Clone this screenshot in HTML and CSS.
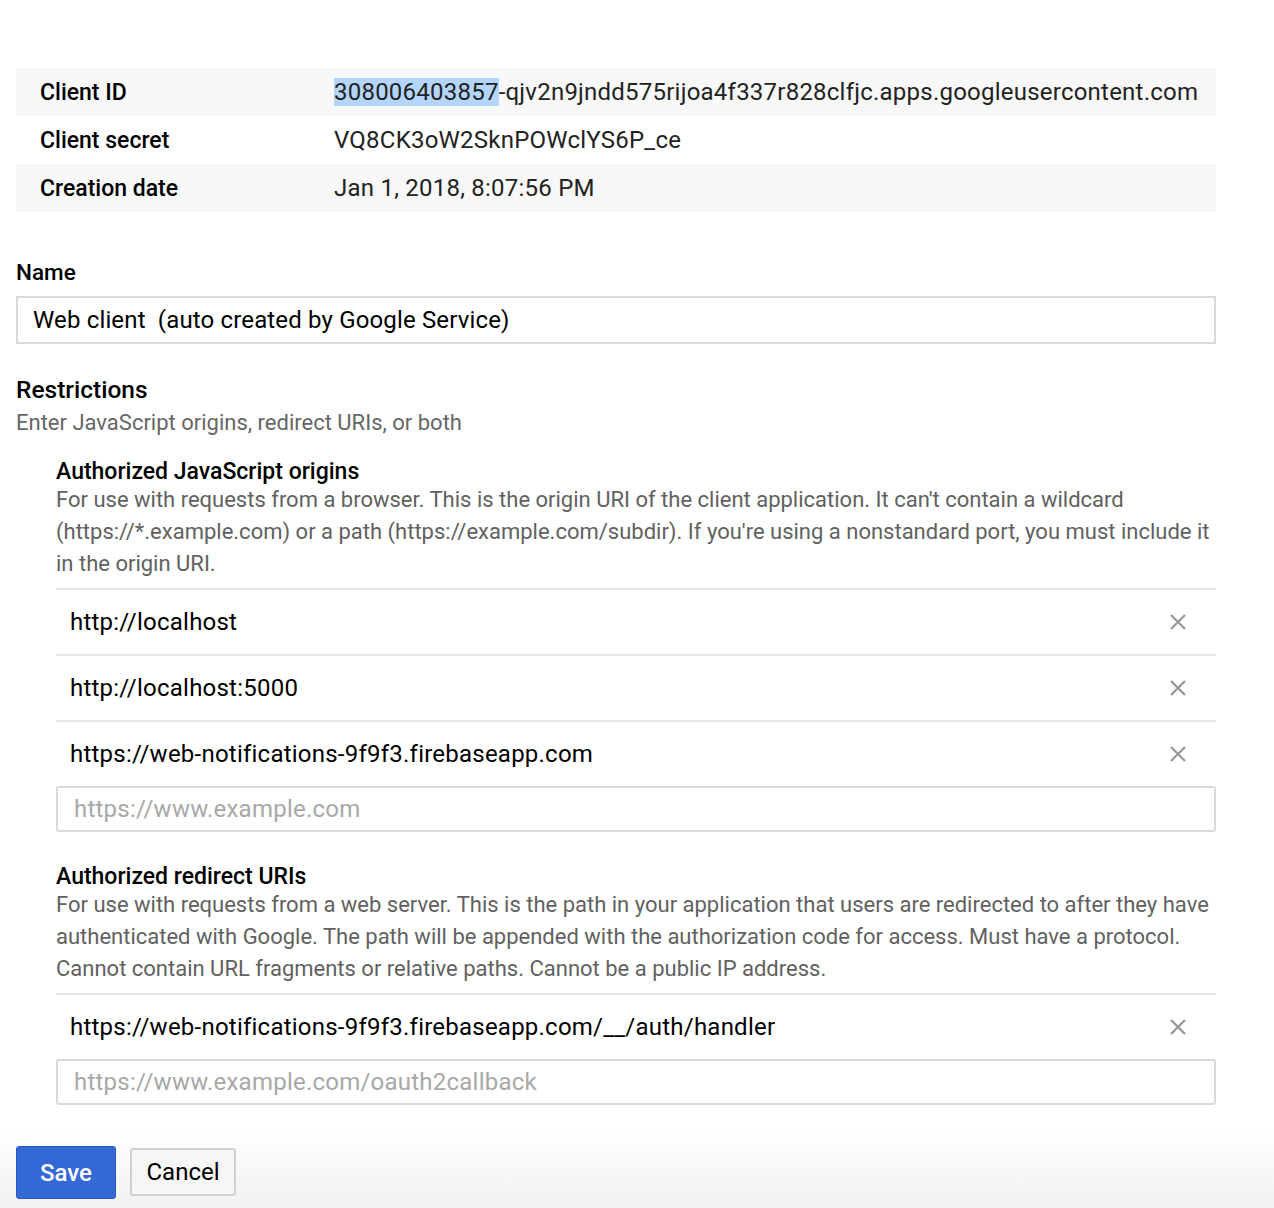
FILE: index.html
```html
<!DOCTYPE html>
<html>
<head>
<meta charset="utf-8">
<link rel="stylesheet" href="styles.css">
</head>
<body>
<div class="page">
  <div class="info">
    <div class="info-row shaded"><div class="info-label">Client ID</div><div class="info-value"><span class="sel">308006403857</span>-qjv2n9jndd575rijoa4f337r828clfjc.apps.googleusercontent.com</div></div>
    <div class="info-row"><div class="info-label">Client secret</div><div class="info-value">VQ8CK3oW2SknPOWclYS6P_ce</div></div>
    <div class="info-row shaded"><div class="info-label">Creation date</div><div class="info-value">Jan 1, 2018, 8:07:56 PM</div></div>
  </div>

  <div class="field">
    <div class="field-label">Name</div>
    <div class="text-input">Web client&nbsp; (auto created by Google Service)</div>
  </div>

  <div class="restrictions">
    <div class="section-title">Restrictions</div>
    <div class="section-sub">Enter JavaScript origins, redirect URIs, or both</div>

    <div class="group">
      <div class="group-title">Authorized JavaScript origins</div>
      <div class="group-desc">For use with requests from a browser. This is the origin URI of the client application. It can't contain a wildcard (https://*.example.com) or a path (https://example.com/subdir). If you're using a nonstandard port, you must include it in the origin URI.</div>
      <div class="list">
        <div class="item"><span>http://localhost</span><svg class="x" viewBox="0 0 18 18"><path d="M2 2L16 16M16 2L2 16"/></svg></div>
        <div class="item"><span>http://localhost:5000</span><svg class="x" viewBox="0 0 18 18"><path d="M2 2L16 16M16 2L2 16"/></svg></div>
        <div class="item last"><span>https://web-notifications-9f9f3.firebaseapp.com</span><svg class="x" viewBox="0 0 18 18"><path d="M2 2L16 16M16 2L2 16"/></svg></div>
        <div class="add-input">https://www.example.com</div>
      </div>
    </div>

    <div class="group">
      <div class="group-title">Authorized redirect URIs</div>
      <div class="group-desc">For use with requests from a web server. This is the path in your application that users are redirected to after they have authenticated with Google. The path will be appended with the authorization code for access. Must have a protocol. Cannot contain URL fragments or relative paths. Cannot be a public IP address.</div>
      <div class="list">
        <div class="item last"><span>https://web-notifications-9f9f3.firebaseapp.com/__/auth/handler</span><svg class="x" viewBox="0 0 18 18"><path d="M2 2L16 16M16 2L2 16"/></svg></div>
        <div class="add-input">https://www.example.com/oauth2callback</div>
      </div>
    </div>
  </div>
</div>
<div class="footer">
  <button class="btn primary">Save</button>
  <button class="btn">Cancel</button>
</div>
</body>
</html>
```
FILE: styles.css
```css
html, body {
  margin: 0;
  padding: 0;
  background: #fff;
}
body {
  font-family: Roboto, "Noto Sans", Arial, sans-serif;
  color: #212121;
  width: 1274px;
  height: 1208px;
  overflow: hidden;
}
.page {
  padding: 68px 58px 0 16px;
}
.info-row {
  display: flex;
  height: 48px;
  align-items: center;
}
.info-row.shaded {
  background: #f8f8f8;
}
.info-label {
  width: 294px;
  padding-left: 24px;
  font-size: 23px;
  font-weight: 500;
  color: #000;
}
.info-value {
  font-size: 24px;
  letter-spacing: 0.23px;
  color: #222;
}
.sel {
  background: #b4d5fe;
}
.field {
  margin-top: 47px;
}
.field-label {
  font-size: 22.5px;
  font-weight: 500;
  color: #000;
  line-height: 26px;
  margin-bottom: 11px;
}
.text-input {
  height: 44px;
  border: 2px solid #d9d9d9;
  display: flex;
  align-items: center;
  padding-left: 15px;
  font-size: 24px;
  letter-spacing: 0.15px;
  color: #000;
}
.restrictions {
  margin-top: 30px;
}
.section-title {
  font-size: 24.5px;
  font-weight: 500;
  color: #000;
  line-height: 32px;
}
.section-sub {
  font-size: 22px;
  color: #666;
  line-height: 34px;
}
.group {
  padding-left: 40px;
  margin-top: 20px;
}
.group + .group {
  margin-top: 33px;
}
.group-title {
  font-size: 23px;
  font-weight: 500;
  color: #000;
  line-height: 24px;
}
.group-desc {
  font-size: 22px;
  color: #616161;
  line-height: 32px;
  padding-bottom: 8px;
}
.list {
  border-top: 2px solid #e5e5e5;
}
.item {
  height: 64px;
  border-bottom: 2px solid #e5e5e5;
  display: flex;
  align-items: center;
  justify-content: space-between;
  padding: 0 29px 0 14px;
  font-size: 24px;
  letter-spacing: 0.23px;
  color: #000;
}
.item.last {
  border-bottom: none;
  height: 64px;
}
.x {
  width: 18px;
  height: 18px;
  stroke: #999;
  stroke-width: 2.4;
  fill: none;
}
.add-input {
  height: 42px;
  border: 2px solid #d9d9d9;
  border-radius: 3px;
  display: flex;
  align-items: center;
  padding-left: 16px;
  font-size: 24px;
  letter-spacing: 0.23px;
  color: #a8a8a8;
}
.footer {
  position: absolute;
  left: 0;
  right: 0;
  bottom: 0;
  height: 80px;
  background: linear-gradient(to bottom, rgba(255,255,255,0), #f1f1f1);
  display: flex;
  align-items: flex-start;
  padding: 18px 16px 0;
  gap: 14px;
  box-sizing: border-box;
}
.btn {
  font-family: Roboto, "Noto Sans", Arial, sans-serif;
  font-size: 24px;
  height: 48px;
  width: 106px;
  padding: 0;
  border: 2px solid #d0d0d0;
  border-radius: 3px;
  background: #f6f6f6;
  color: #000;
  margin-top: 2px;
}
.btn.primary {
  height: 53px;
  margin-top: 0;
  width: 100px;
  background: #3468d4;
  border: 1px solid #2a56c6;
  color: #fff;
  font-weight: 500;
}
```
